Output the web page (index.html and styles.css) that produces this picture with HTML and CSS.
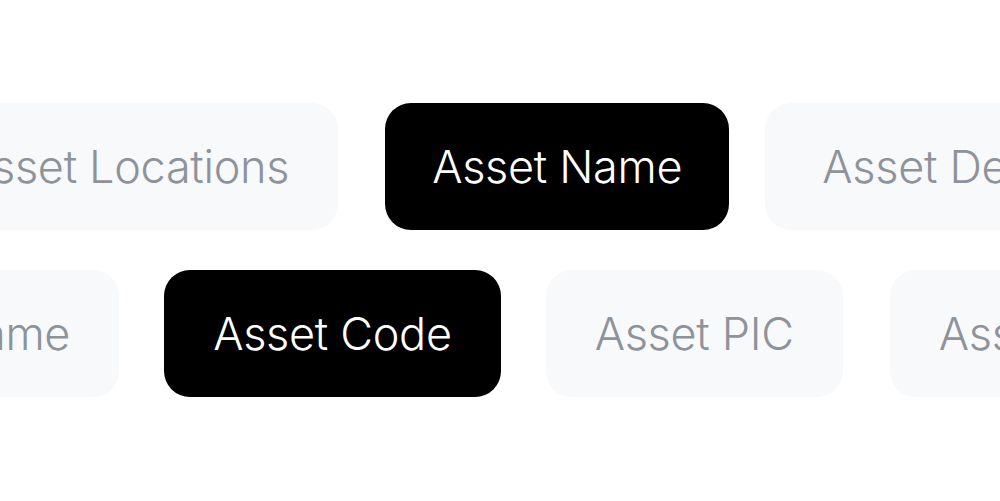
FILE: index.html
```html
<!DOCTYPE html>
<html>
<head>
<meta charset="utf-8">
<link rel="stylesheet" href="styles.css">
</head>
<body>
<main class="stage">
  <div class="row row-1">
    <span class="chip chip-first-1">Asset Locations</span>
    <span class="chip active chip-name">Asset Name</span>
    <span class="chip chip-desc">Asset Description</span>
  </div>
  <div class="row row-2">
    <span class="chip chip-first-2">Asset Name</span>
    <span class="chip active">Asset Code</span>
    <span class="chip chip-pic">Asset PIC</span>
    <span class="chip">Asset Type</span>
  </div>
</main>
</body>
</html>
```

FILE: styles.css
```css
html, body {
  margin: 0;
  padding: 0;
  background: #ffffff;
}
.stage {
  width: 1000px;
  height: 501px;
  overflow: hidden;
  padding-top: 103px;
  box-sizing: border-box;
  display: flex;
  flex-direction: column;
  gap: 40px;
  font-family: Inter, "Noto Sans", sans-serif;
}
.row {
  display: flex;
  flex-wrap: nowrap;
  white-space: nowrap;
}
.chip {
  flex: none;
  height: 127px;
  display: flex;
  align-items: center;
  padding: 0 49px;
  border-radius: 26px;
  background: #f8f9fa;
  color: #8e929b;
  font-size: 45px;
  font-weight: 300;
  letter-spacing: -0.3px;
  margin-right: 45px;
}
.chip.active {
  background: #000000;
  color: #ffffff;
}
.chip-first-1 { margin-left: -87px; margin-right: 47px; }
.chip-name { padding: 0 47px; margin-right: 36px; }
.chip-desc { padding-left: 57px; }
.chip-first-2 { margin-left: -229px; }
.chip-pic { margin-right: 47px; }
```
